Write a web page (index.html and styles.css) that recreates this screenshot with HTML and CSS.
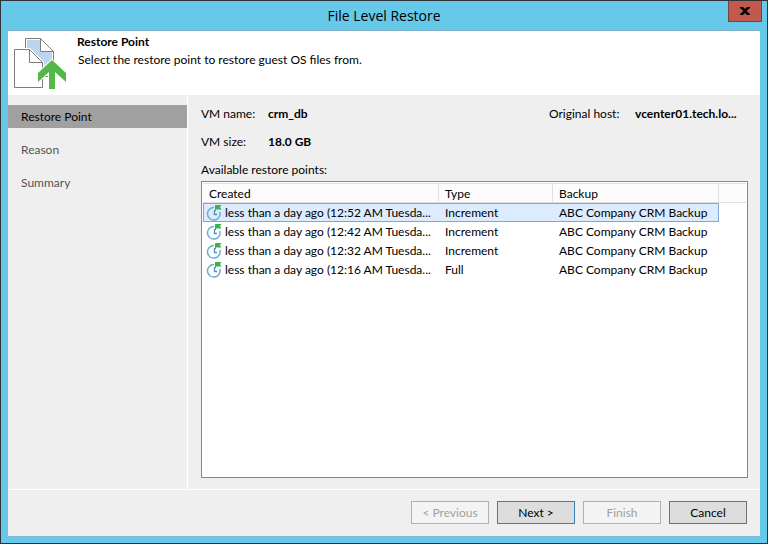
FILE: index.html
```html
<!DOCTYPE html>
<html lang="en">
<head>
<meta charset="utf-8">
<title>File Level Restore</title>
<link rel="stylesheet" href="styles.css">
</head>
<body>
<svg class="symbols" aria-hidden="true">
  <symbol id="restore-clock" viewBox="0 0 16 17">
    <path d="M8 3.500A6.300 6.300 0 1 0 13.800 8" fill="none" stroke="#69aed3" stroke-width="1.500"/>
    <path d="M8.500 6v4.500H11" fill="none" stroke="#4a92bf" stroke-width="1.300"/>
    <path d="M9 1h6.500l-1.500 2L15.500 5.500H10V7H9z" fill="#3cb34a"/>
  </symbol>
</svg>
<div class="window">
  <header class="titlebar">
    <h1 class="title">File Level Restore</h1>
    <button class="close" type="button" aria-label="Close">
      <svg width="10" height="8" viewBox="0 0 10 8"><path d="M0 0h3l2 2 2-2h3v1L6.500 4 10 7v1H7L5 6 3 8H0V7l3.500-3L0 1z"/></svg>
    </button>
  </header>
  <div class="client">
    <section class="banner">
      <svg class="banner-icon" width="54" height="52" viewBox="0 0 54 52" aria-hidden="true">
        <path d="M11.500 1.500h15l13 13v25h-28z" fill="#fff" stroke="#7d7d7d"/>
        <path d="M13 3h13v12h12v22H13z" fill="#bbd5ef"/>
        <path d="M26.500 1.500v13h13z" fill="#fff" stroke="#7d7d7d"/>
        <path d="M.5 12.500h15l13 13v25H.5z" fill="#fff" stroke="#fff" stroke-width="3"/>
        <path d="M.5 12.500h15l13 13v25H.5z" fill="#fff" stroke="#7d7d7d"/>
        <path d="M15.500 12.500v13h13" fill="none" stroke="#7d7d7d"/>
        <path d="M38 23l14 13v9L41 35v17h-6V35L24 45v-9z" fill="#53b848" stroke="#fff" stroke-width="2" paint-order="stroke"/>
      </svg>
      <div class="banner-text">
        <h2 class="heading">Restore Point</h2>
        <p class="subheading">Select the restore point to restore guest OS files from.</p>
      </div>
    </section>
    <div class="body">
      <nav class="steps">
        <a class="step current" href="#restore-point" aria-current="step">Restore Point</a>
        <a class="step" href="#reason">Reason</a>
        <a class="step" href="#summary">Summary</a>
      </nav>
      <main class="content">
        <dl class="facts">
          <dt>VM name:</dt><dd>crm_db</dd>
          <dt>Original host:</dt><dd>vcenter01.tech.lo...</dd>
          <dt>VM size:</dt><dd>18.0 GB</dd>
        </dl>
        <p class="list-label" id="points-label">Available restore points:</p>
        <div class="list">
          <table class="points" aria-labelledby="points-label">
            <colgroup><col class="col-created"><col class="col-type"><col class="col-backup"><col></colgroup>
            <thead>
              <tr><th>Created</th><th>Type</th><th>Backup</th><td></td></tr>
            </thead>
            <tbody>
              <tr class="selected"><td><span class="point"><svg class="clock"><use href="#restore-clock"/></svg>less than a day ago (12:52 AM Tuesda...</span></td><td>Increment</td><td>ABC Company CRM Backup</td></tr>
              <tr><td><span class="point"><svg class="clock"><use href="#restore-clock"/></svg>less than a day ago (12:42 AM Tuesda...</span></td><td>Increment</td><td>ABC Company CRM Backup</td></tr>
              <tr><td><span class="point"><svg class="clock"><use href="#restore-clock"/></svg>less than a day ago (12:32 AM Tuesda...</span></td><td>Increment</td><td>ABC Company CRM Backup</td></tr>
              <tr><td><span class="point"><svg class="clock"><use href="#restore-clock"/></svg>less than a day ago (12:16 AM Tuesda...</span></td><td>Full</td><td>ABC Company CRM Backup</td></tr>
            </tbody>
          </table>
        </div>
      </main>
    </div>
    <footer class="actions">
      <button class="btn" type="button" disabled>&lt; Previous</button>
      <button class="btn default" type="button">Next &gt;</button>
      <button class="btn" type="button" disabled>Finish</button>
      <button class="btn" type="button">Cancel</button>
    </footer>
  </div>
</div>
</body>
</html>
```
FILE: styles.css
```css
* { box-sizing: border-box; }

body {
  margin: 0;
  font: 12px/18px Lato, "Open Sans", sans-serif;
  color: #000;
}

h1, h2, p, dl, dd { margin: 0; }

.symbols { display: none; }

.window {
  display: flex;
  flex-direction: column;
  min-height: 100vh;
  padding: 0 7px 6px;
  border: 1px solid #2f3338;
  background: #66c9e9;
}

.titlebar {
  display: grid;
  grid-template-columns: 1fr auto 1fr;
  height: 30px;
  border-bottom: 1px solid #7fb0c6;
}

.title {
  grid-column: 2;
  font-family: "Open Sans", sans-serif;
  font-size: 14px;
  font-weight: 400;
  line-height: 30px;
}

.close {
  display: grid;
  place-items: center;
  justify-self: end;
  width: 34px;
  height: 21px;
  margin-right: -2px;
  padding: 0;
  border: 1px solid #704540;
  border-top: 0;
  background: #c2594f;
}

.client {
  display: flex;
  flex: 1;
  flex-direction: column;
  border-bottom: 1px solid #7fb8cc;
  background: #efefef;
}

.banner {
  display: flex;
  gap: 9px;
  height: 64px;
  padding: 0 6px;
  background: #fff;
}

.banner-icon { flex: none; margin-top: 6px; }

.banner-text { padding-top: 2px; }

.heading {
  font-size: 12px;
  font-weight: 700;
}

.subheading { padding-left: 1px; }

.body {
  display: flex;
  flex: 1;
}

.steps {
  display: flex;
  flex: 0 0 180px;
  flex-direction: column;
  gap: 10px;
  padding-top: 10px;
  border-right: 1px solid #fff;
}

.step {
  padding: 0 13px;
  color: #555;
  line-height: 23px;
  text-decoration: none;
}

.step.current {
  background: #a0a0a0;
  color: #000;
}

.content {
  display: flex;
  flex: 1;
  flex-direction: column;
  min-width: 0;
  padding: 10px 12px 11px 13px;
}

.facts {
  display: grid;
  grid-template-columns: 67px 1fr 86px 113px;
  row-gap: 10px;
  white-space: nowrap;
}

.facts dd { font-weight: 700; }

.list-label { margin: 10px 0 2px; }

.list {
  flex: 1;
  padding: 1px;
  border: 1px solid #828790;
  background: #fff;
}

.points {
  width: 100%;
  table-layout: fixed;
  border-spacing: 0;
  white-space: nowrap;
}

.col-created { width: 236px; }
.col-type { width: 114px; }
.col-backup { width: 166px; }

.points th,
.points td {
  height: 19px;
  padding: 0 6px;
  border: 0 solid transparent;
  border-width: 1px 0;
  line-height: 17px;
  text-align: left;
}

.points td:first-child { padding: 0 0 0 3px; }

.points thead th,
.points thead td {
  height: 20px;
  border-color: #e0e0e0;
  border-right-width: 1px;
  background: #fcfcfc;
  font-weight: 400;
}

.points thead td { border-right-width: 0; }

.points .selected td {
  border-color: #7da7d9;
  background: #dcebfe;
}

.points .selected td:first-child { border-left-width: 1px; padding-left: 2px; }
.points .selected td:last-child { border-right-width: 1px; }

.point {
  display: flex;
  align-items: center;
  gap: 3px;
}

.clock {
  flex: none;
  width: 16px;
  height: 17px;
}

.actions {
  display: flex;
  justify-content: flex-end;
  gap: 8px;
  padding: 11px 13px 12px;
  border-top: 1px solid #fff;
}

.btn {
  width: 78px;
  height: 23px;
  padding: 0;
  border: 1px solid #707070;
  background: #ddd;
  color: #000;
  font: inherit;
}

.btn.default { border-color: #3c7fb1; }

.btn:disabled {
  border-color: #adb2b5;
  background: #f4f4f4;
  color: #a0a0a0;
}
```
